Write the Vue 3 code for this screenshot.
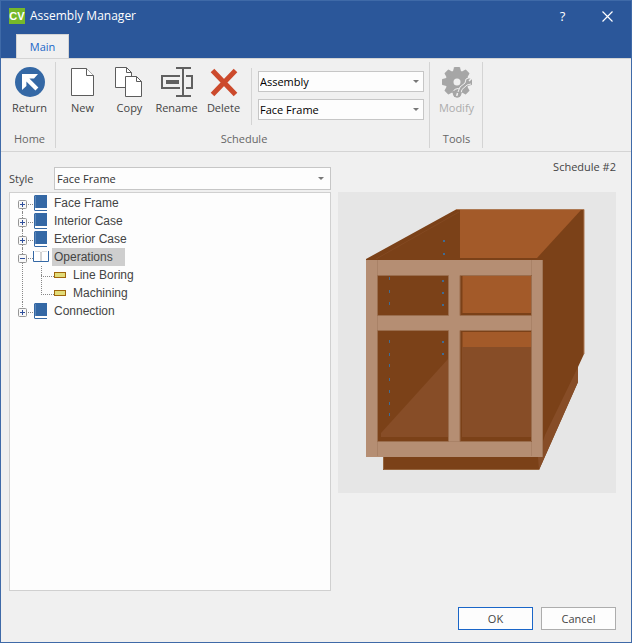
<script setup>
import { ref } from 'vue'

const schedule = ref('Assembly')
const frame = ref('Face Frame')
const style = ref('Face Frame')
const selected = ref('Operations')

const tree = ref([
  { name: 'Face Frame', open: false, children: [] },
  { name: 'Interior Case', open: false, children: [] },
  { name: 'Exterior Case', open: false, children: [] },
  { name: 'Operations', open: true, children: ['Line Boring', 'Machining'] },
  { name: 'Connection', open: false, children: [] },
])

const leftHoles = [85, 98, 110, 148, 161, 172, 186, 198, 210, 221]
const rightHoles = [88, 100, 112, 149, 161]
const backHoles = [48, 61]
</script>

<template>
  <div class="window">
    <header class="titlebar">
      <div class="caption">
        <svg class="logo" width="16" height="16" viewBox="0 0 16 16" aria-hidden="true">
          <rect width="16" height="16" fill="#76b82a" />
          <text x="8" y="12" text-anchor="middle">CV</text>
        </svg>
        <h1>Assembly Manager</h1>
        <button class="sys" type="button" aria-label="Help">?</button>
        <button class="sys" type="button" aria-label="Close">
          <svg width="11" height="11" viewBox="0 0 11 11"><path d="M.5 .5L10.5 10.5M10.5 .5L.5 10.5" stroke="#fff" stroke-width="1.2" /></svg>
        </button>
      </div>
      <nav class="tabs"><button class="tab" type="button">Main</button></nav>
    </header>

    <section class="ribbon">
      <div class="group home">
        <div class="tools">
          <button class="tool" type="button">
            <svg width="32" height="32" viewBox="0 0 32 32">
              <circle cx="16" cy="16" r="15" fill="#3468a5" />
              <path d="M8 8H24L20 12.4H15.4L24.4 21.5L21.4 24.5L12.4 15.4V20L8 24Z" fill="#fff" />
            </svg>
            <span>Return</span>
          </button>
        </div>
        <div class="group-name">Home</div>
      </div>

      <div class="group schedule">
        <div class="tools">
          <button class="tool" type="button">
            <svg width="32" height="32" viewBox="0 0 32 32">
              <path d="M4.500 2.500H19.500L26.500 9.500V29.500H4.500Z" fill="#fff" stroke="#5c5c5c" />
              <path d="M19.500 2.500V9.500H26.500" fill="#fff" stroke="#5c5c5c" />
            </svg>
            <span>New</span>
          </button>
          <button class="tool" type="button">
            <svg width="32" height="32" viewBox="0 0 32 32">
              <path d="M1.500 1.500H12.500L17.500 6.500V21.500H1.500Z" fill="#fff" stroke="#5c5c5c" />
              <path d="M12.500 1.500V6.500H17.500" fill="none" stroke="#5c5c5c" />
              <path d="M11.500 10.500H22.500L27.500 15.500V30.500H11.500Z" fill="#fff" stroke="#5c5c5c" />
              <path d="M22.500 10.500V15.500H27.500" fill="none" stroke="#5c5c5c" />
            </svg>
            <span>Copy</span>
          </button>
          <button class="tool" type="button">
            <svg width="32" height="32" viewBox="0 0 32 32">
              <path d="M19 10H1V22H19M25 10H31V22H25" fill="none" stroke="#606060" stroke-width="2" />
              <path d="M5 14H18V18H5Z" fill="#606060" />
              <path d="M15 2H30M15 30H30M22 2V30" fill="none" stroke="#606060" stroke-width="2" />
            </svg>
            <span>Rename</span>
          </button>
          <button class="tool" type="button">
            <svg width="32" height="32" viewBox="0 0 32 32">
              <path d="M4.500 4.500L27.500 28.500M27.500 4.500L4.500 28.500" stroke="#cc4a2c" stroke-width="5" />
            </svg>
            <span>Delete</span>
          </button>
          <div class="choices">
            <label class="select">
              <select v-model="schedule" aria-label="Schedule type"><option>Assembly</option></select>
            </label>
            <label class="select">
              <select v-model="frame" aria-label="Schedule style"><option>Face Frame</option></select>
            </label>
          </div>
        </div>
        <div class="group-name">Schedule</div>
      </div>

      <div class="group modify">
        <div class="tools">
          <button class="tool" type="button" disabled>
            <svg width="32" height="32" viewBox="0 0 32 32">
              <g fill="#a6a6a6">
                <circle cx="16" cy="16" r="11.500" />
                <path v-for="n in 8" :key="n" d="M11.500 7L13 1.500Q13.200 1 13.700 1H18.300Q18.800 1 19 1.500L20.500 7Z" :transform="`rotate(${n * 45} 16 16)`" />
              </g>
              <circle cx="16" cy="16" r="3.500" fill="#f0f0f0" />
              <path d="M17 26L19 21L24 17L25 13L30 11" fill="none" stroke="#f0f0f0" />
              <path d="M20 27L21 23.500L26 19L30 18" fill="none" stroke="#f0f0f0" />
              <path d="M12 26Q13 22.500 17 22.500L18 23" fill="none" stroke="#f0f0f0" />
              <path d="M16.500 27L15.500 31M28 15L31 12" stroke="#f0f0f0" stroke-width="1.500" />
              <path d="M12.500 25Q12 30 16 31Q20 30.500 20 26" fill="none" stroke="#a6a6a6" stroke-width="1.500" />
            </svg>
            <span>Modify</span>
          </button>
        </div>
        <div class="group-name">Tools</div>
      </div>
    </section>

    <main class="content">
      <div class="left">
        <div class="field">
          <label for="style">Style</label>
          <div class="select tall">
            <select id="style" v-model="style"><option>Face Frame</option></select>
          </div>
        </div>
        <ul class="tree">
          <li v-for="item in tree" :key="item.name" class="node">
            <div class="row">
              <button class="toggle" type="button" :aria-label="`Toggle ${item.name}`" @click="item.open = !item.open">
                <svg width="9" height="9" viewBox="0 0 9 9">
                  <rect x=".5" y=".5" width="8" height="8" rx="1" fill="#f8f8f8" stroke="#969696" />
                  <path :d="item.open ? 'M2 4.500H7' : 'M2 4.500H7M4.500 2V7'" stroke="#2f4f9c" />
                </svg>
              </button>
              <svg v-if="item.open" class="book" width="16" height="16" viewBox="0 0 16 16">
                <path d="M.500 2V12.500H15.500V2" fill="#fff" stroke="#3468a5" />
                <path d="M2 2.500H7L8 3.500L9 2.500H14" fill="none" stroke="#ddd" />
                <path d="M8 3V12" stroke="#aaa" />
              </svg>
              <svg v-else class="book" width="16" height="16" viewBox="0 0 16 16">
                <path d="M1 1L2 0H14V13H2V15H14V16H2L1 15Z" fill="#3468a5" />
                <path d="M2.500 1V13" stroke="#5c86b8" />
                <path d="M2 13H14V15H2Z" fill="#fff" />
              </svg>
              <button class="name" :class="{ selected: selected === item.name }" type="button" @click="selected = item.name">{{ item.name }}</button>
            </div>
            <ul v-if="item.open" class="leaves">
              <li v-for="leaf in item.children" :key="leaf" class="leaf">
                <svg width="12" height="6" viewBox="0 0 12 6"><rect x=".5" y=".5" width="11" height="5" fill="#e2dc78" stroke="#a0660c" /></svg>
                <button class="name" :class="{ selected: selected === leaf }" type="button" @click="selected = leaf">{{ leaf }}</button>
              </li>
            </ul>
          </li>
        </ul>
      </div>

      <div class="right">
        <div class="number">Schedule #2</div>
        <svg class="preview" viewBox="0 0 278 301" role="img" aria-label="Base cabinet">
          <rect width="278" height="301" fill="#e6e6e6" />
          <path d="M28 67L118 17.500H246V162L240 175V190L201 278H45V264H28Z" fill="#7b4118" />
          <path d="M122 18H243L199 66H122Z" fill="#a35a29" />
          <path d="M38 67L121 20" stroke="#8a512b" stroke-width=".5" />
          <path d="M118 17.500H246V162" fill="none" stroke="#ad7953" />
          <path d="M240 175V190L201 278L200 265L207 243Z" fill="#874d27" />
          <path d="M45.500 265V277.500H201" fill="none" stroke="#96663f" />
          <path d="M28 67H205V265H28ZM40 83V123H110V83ZM122 83V123H194V83ZM40 139V250H110V139ZM122 139V250H194V139Z" fill="#b58e73" fill-rule="evenodd" />
          <path d="M28 67.500H205" fill="none" stroke="#7b4118" />
          <path d="M204.500 68V265" fill="none" stroke="#a1785a" />
          <path d="M39.500 68V264M193.500 68V83M193.500 123V139M193.500 250V264M110 249.500H122" stroke="#a98267" />
          <path d="M39.500 83.500H110.500V123.500H39.500ZM122 83.500H193.500V123.500H122ZM39.500 138.500H110.500V249.500H39.500ZM122 138.500H193.500V249.500H122Z" fill="none" stroke="#9a6d4d" />
          <rect x="124.500" y="84" width="68.500" height="37" fill="#a35a29" />
          <rect x="124.500" y="140" width="68.500" height="15" fill="#a35a29" />
          <path d="M124 155H193V245H124Z" fill="#874d27" />
          <path d="M110 167V245H43V241Z" fill="#874d27" />
          <g fill="#3f6c94">
            <rect v-for="y in leftHoles" :key="`l${y}`" x="51" :y="y" width="1" height="3" />
            <rect v-for="y in rightHoles" :key="`r${y}`" x="104" :y="y" width="2" height="2" />
            <rect v-for="y in backHoles" :key="`b${y}`" x="105" :y="y" width="2" height="2" />
          </g>
        </svg>
      </div>
    </main>

    <footer class="actions">
      <button class="action primary" type="button">OK</button>
      <button class="action" type="button">Cancel</button>
    </footer>
  </div>
</template>

<style>
body { margin: 0; }
</style>

<style scoped>
* { box-sizing: border-box; }
button, select { font: inherit; color: inherit; }
button { border: 0; padding: 0; background: none; }
svg { display: block; flex: none; }
ul { list-style: none; margin: 0; padding: 0; }

.window {
  min-height: 100vh;
  display: flex;
  flex-direction: column;
  border: 1px solid #3f6aa8;
  background: #f0f0f0;
  color: #444;
  font: 11px/16px "Open Sans", "Noto Sans", sans-serif;
}
.titlebar { background: #2b579a; color: #fff; }
.caption { display: flex; align-items: center; height: 30px; padding: 0 1px 0 8px; }
.caption h1 { flex: 1; margin: 0 0 0 5px; font-size: 12px; font-weight: 400; }
.logo text { fill: #fff; font: bold 11px "Liberation Sans", Arial, sans-serif; }
.sys { display: grid; place-items: center; width: 45px; height: 28px; font-size: 13px; }
.tabs { display: flex; padding: 3px 15px 0; }
.tab {
  width: 53px;
  height: 24px;
  border: 1px solid #d4d4d4;
  border-bottom: 0;
  background: #f0f0f0;
  color: #1a66c8;
}

.ribbon { display: flex; height: 94px; padding: 3px 0; border-top: 1px solid #d4d4d4; border-bottom: 1px solid #d4d4d4; }
.group { display: flex; flex-direction: column; border-right: 1px solid #d4d4d4; }
.home { width: 55px; padding-left: 3px; }
.schedule { width: 374px; padding-left: 3px; }
.modify { width: 53px; padding-left: 1px; }
.tools { display: flex; flex: 1; padding-top: 4px; }
.home .tools, .modify .tools { justify-content: center; }
.tool { display: flex; flex-direction: column; align-items: center; gap: 2px; width: 47px; }
.tool:disabled { color: #acacac; }
.group-name { height: 17px; color: #666; text-align: center; }
.choices {
  display: flex;
  flex: 1;
  flex-direction: column;
  gap: 7px;
  height: 57px;
  margin: 2px 5px 0 4px;
  padding: 3px 0 0 6px;
  border-left: 1px solid #d4d4d4;
}
.select { position: relative; display: block; height: 21px; color: #000; }
.select::after {
  content: "";
  position: absolute;
  top: 50%;
  right: 5px;
  margin-top: -2px;
  border: 3px solid transparent;
  border-top-color: #777;
  border-bottom: 0;
  pointer-events: none;
}
select {
  display: block;
  width: 100%;
  height: 100%;
  padding: 0 16px 0 1px;
  border: 1px solid #c6c6c6;
  border-radius: 0;
  background: #fdfdfd;
  appearance: none;
}
.tall { flex: 1; height: 23px; color: #333; }
.tall select { padding-left: 2px; }
.tall::after { right: 7px; }

.content {
  flex: 1;
  display: grid;
  grid-template-columns: 322fr 278fr;
  gap: 7px;
  padding: 7px 15px 0 8px;
}
.left { display: flex; flex-direction: column; gap: 2px; padding-top: 8px; }
.field { display: flex; align-items: center; }
.field label { width: 45px; }
.tree {
  flex: 1;
  padding: 1px 0;
  border: 1px solid #d0d0d0;
  background: #fdfdfd;
  font-family: "Liberation Sans", Arial, sans-serif;
  font-size: 12px;
}
.node { position: relative; }
.node::before { content: ""; position: absolute; top: 0; bottom: 0; left: 12px; border-left: 1px dotted #888; }
.node:first-child::before { top: 9px; }
.node:last-child::before { bottom: 9px; }
.row { display: flex; align-items: center; height: 18px; padding-left: 8px; }
.toggle { position: relative; z-index: 1; padding-top: 3px; }
.toggle::after { content: ""; position: absolute; top: 7px; left: 10px; width: 5px; border-top: 1px dotted #888; }
.book { margin: 0 3px 0 6px; }
.name { height: 18px; padding: 0 12px 0 2px; line-height: 18px; white-space: nowrap; }
.selected { background: #cecece; }
.leaves { padding-left: 31px; }
.leaf { display: flex; align-items: center; gap: 5px; height: 18px; position: relative; padding-left: 13px; }
.leaf::before { content: ""; position: absolute; top: 0; left: 0; width: 12px; height: 10px; border: 1px dotted #888; border-width: 0 0 1px 1px; }
.leaf + .leaf::before { top: -9px; height: 19px; }
.number { padding-bottom: 17px; text-align: right; }
.preview { width: 100%; }
.actions { display: flex; justify-content: flex-end; gap: 8px; padding: 16px 15px 12px; }
.action { width: 75px; height: 23px; border: 1px solid #adadad; background: #fdfdfd; }
.primary { border-color: #1a66c8; }
</style>
